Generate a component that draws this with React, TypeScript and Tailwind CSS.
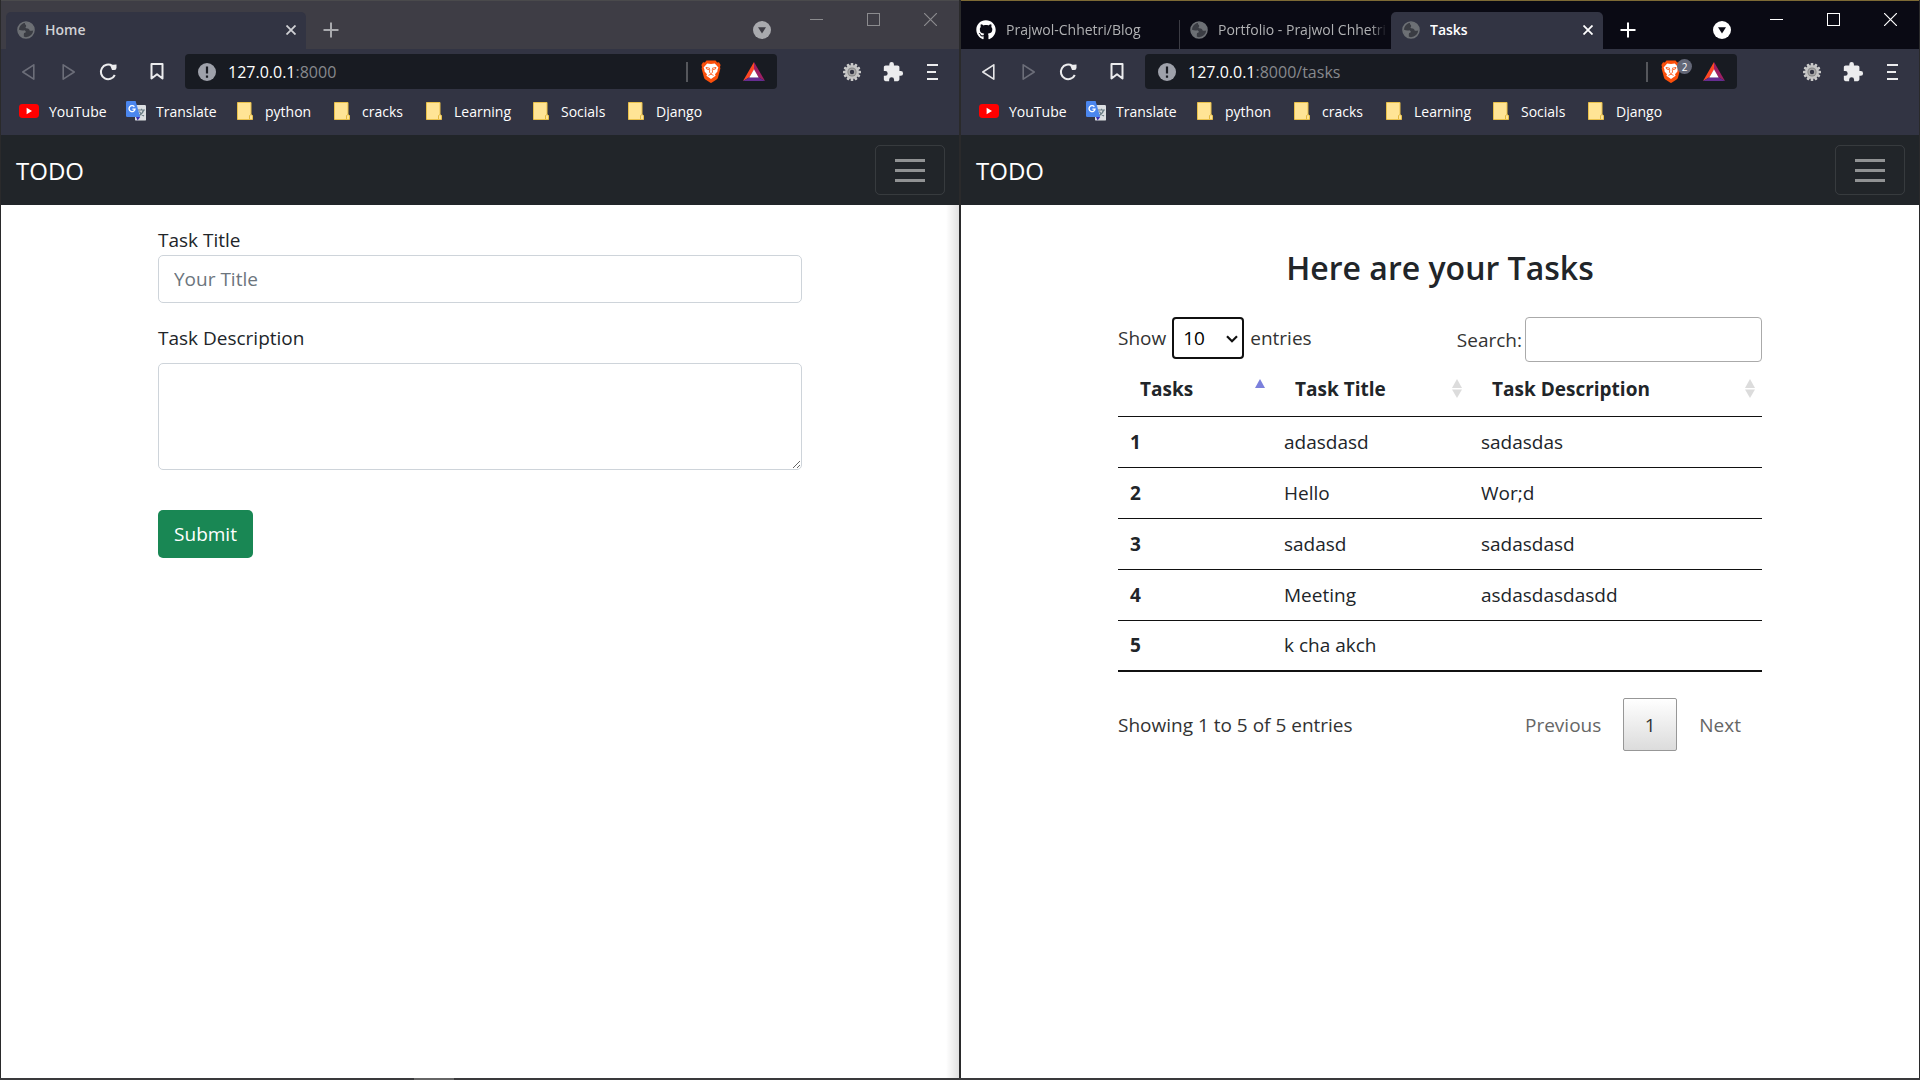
import React, { ReactNode } from 'react';
import { FaGithub } from 'react-icons/fa';

function Globe() {
  return (
    <svg viewBox="0 0 18 18" className="size-[18px] shrink-0" aria-hidden="true">
      <circle cx="9" cy="9" r="8" fill="#3a3c43" stroke="#6d7075" strokeWidth="1.6" />
      <path d="M1.5 8.5 Q5 10 7.5 9.2 Q9.5 10 8.6 11.6 Q6.5 11.6 6.8 13.6 Q7 15.5 6.6 16.8 Q1.5 14.5 1.5 8.5Z" fill="#6d7075" />
      <path d="M8 1.4 Q7.4 3.4 9 4 Q9.6 5.6 8.4 6.4 Q9 7.6 11 7.4 Q12.6 8.4 12.8 9.8 Q15 9.8 16.6 9.4 Q16.8 3 10.6 1.4Z" fill="#6d7075" />
    </svg>
  );
}

function Youtube() {
  return (
    <svg viewBox="0 0 20 14" className="h-[14px] w-5" aria-hidden="true">
      <rect width="20" height="14" rx="3.4" fill="#f00" />
      <path d="M7.600 3.800 13 7 7.600 10.200Z" fill="#fff" />
    </svg>
  );
}

function Translate() {
  return (
    <svg viewBox="0 0 20 20" className="size-5" aria-hidden="true">
      <rect x="9" y="4" width="11" height="15.6" rx="1.2" fill="#dcdfe2" />
      <path d="M12 9h7M15.5 7.8V9M17.6 9q-1 3.8-5 5.8M13.4 10.4q1.4 3 4.6 4.6" fill="none" stroke="#6b7d85" strokeWidth="1.2" />
      <path d="M10 16h4.2L11.6 19.6Z" fill="#3a2fb5" />
      <path d="M1.3 0H9.6L14.2 16H1.3Q0 16 0 14.700V1.300Q0 0 1.300 0Z" fill="#4b86ee" />
      <path d="M8.400 5.800A3 3 0 1 0 9 8.100H6.400" fill="none" stroke="#fff" strokeWidth="1.400" />
    </svg>
  );
}

function Folder() {
  return (
    <svg viewBox="0 0 16 18" className="h-[18px] w-4" aria-hidden="true">
      <path d="M.5.5H14V12.500L15.500 13.500V17.500H.5Z" fill="#ffe495" stroke="#e9c04a" />
      <path d="M12.500 17V13.500L14 12.500" fill="none" stroke="#e3b93f" />
    </svg>
  );
}

function BraveShield() {
  return (
    <svg viewBox="0 0 20 23" className="h-[23px] w-5" aria-hidden="true">
      <path d="M5.500.6H14.500L16.200 2.400 18 2.200 19.600 5 19 7 19.400 8.600 17 17.400Q16.600 18.700 15.600 19.400L10.600 22.800Q10 23.100 9.400 22.800L4.400 19.400Q3.400 18.700 3 17.400L.6 8.600 1 7 .4 5 2 2.200 3.800 2.400Z" fill="#fb4f0b" />
      <path d="M10 4 13.800 3.600 17.400 7.600 16.600 9.600 16.400 11.600 14 14.200 14.600 15.800 10 19 5.400 15.800 6 14.200 3.600 11.600 3.400 9.600 2.600 7.600 6.200 3.600Z" fill="#fff" />
      <path d="M5 7.400 8.600 8.200 8.200 9.800 5.600 9ZM15 7.400 11.400 8.200 11.800 9.800 14.400 9ZM8.800 9.600 8.400 12.400 10 13.600 11.600 12.400 11.200 9.600" fill="none" stroke="#fb4f0b" strokeWidth=".8" />
      <path d="M7.400 15.400 10 14.200 12.600 15.400" fill="none" stroke="#fb4f0b" strokeWidth=".8" />
    </svg>
  );
}

function BatTriangle() {
  return (
    <svg viewBox="0 0 22 19" className="h-[19px] w-[22px]" aria-hidden="true">
      <path d="M11 0 0 19 6.500 15.300 11 7.500Z" fill="#ff4724" />
      <path d="M11 0 22 19 15.500 15.300 11 7.500Z" fill="#9e1f63" />
      <path d="M0 19H22L15.500 15.300H6.500Z" fill="#662d91" />
      <path d="M11 7.200 15.700 15.400H6.300Z" fill="#fff" />
    </svg>
  );
}

const teeth = [0, 30, 60, 90, 120, 150];

function Gear() {
  return (
    <svg viewBox="-9 -9 18 18" className="size-[18px]" aria-hidden="true">
      {teeth.map((a) => (
        <rect key={a} x="-1.300" y="-9" width="2.600" height="18" rx=".6" fill="#c9c9c9" transform={`rotate(${a})`} />
      ))}
      <circle r="7" fill="#c4c4c4" />
      <circle r="4.600" fill="#858585" />
      <circle r="3.600" fill="#a9a9a9" />
      <circle r="2.200" fill="#323443" />
    </svg>
  );
}

type TabProps = { title: string; icon: ReactNode; active?: boolean; className: string; ink?: string };

function Tab({ title, icon, active, className, ink }: TabProps) {
  return (
    <div className={`flex h-[37px] items-center pb-[2px] ${className}`}>
      {icon}
      <span className={`ml-[10px] min-w-0 flex-1 overflow-hidden text-[14px] whitespace-nowrap ${active ? `font-semibold ${ink}` : 'mask-r-from-90% text-[#b0b1b3]'}`}>{title}</span>
      {active && (
        <button type="button" aria-label={`Close ${title}`} className={`mr-[10px] ${ink}`}>
          <svg viewBox="0 0 10 10" className="size-[10px]" aria-hidden="true">
            <path d="M.5.5 9.500 9.500M9.500.5.5 9.500" stroke="currentColor" strokeWidth="1.800" />
          </svg>
        </button>
      )}
    </div>
  );
}

const bookmarks = [
  { name: 'YouTube', icon: <Youtube />, box: 'w-[107px] gap-[10px]' },
  { name: 'Translate', icon: <Translate />, box: 'w-[111px] gap-[10px]' },
  { name: 'python', icon: <Folder />, box: 'w-[97px] gap-3' },
  { name: 'cracks', icon: <Folder />, box: 'w-[92px] gap-3' },
  { name: 'Learning', icon: <Folder />, box: 'w-[107px] gap-3' },
  { name: 'Socials', icon: <Folder />, box: 'w-[95px] gap-3' },
  { name: 'Django', icon: <Folder />, box: 'w-[95px] gap-3' },
];

type WindowProps = {
  focused: boolean;
  tabs: ReactNode;
  path: string;
  blocked?: number;
  children: ReactNode;
};

function BrowserWindow({ focused, tabs, path, blocked, children }: WindowProps) {
  const ink = focused ? 'text-white' : 'text-[#a9aaae]';
  const chrome = focused ? 'text-white' : 'text-[#8b8b8e]';
  return (
    <section className="flex min-w-0 flex-1 flex-col border-x border-[#2a2a2b] bg-white">
      <header className={`flex h-[49px] items-start border-t ${focused ? 'border-[#7d6a35] bg-[#0a0a14]' : 'border-[#4a4a4c] bg-[#3e3d45]'}`}>
        <div className="flex min-w-0 items-end self-stretch">{tabs}</div>
        <button type="button" aria-label="New tab" className={`mt-[21px] ml-[17px] ${ink}`}>
          <svg viewBox="0 0 16 16" className="size-4" aria-hidden="true">
            <path d="M8 .5V15.500M.5 8H15.500" stroke="currentColor" strokeWidth="2" />
          </svg>
        </button>
        <button type="button" aria-label="Search tabs" className={`mt-[20px] mr-[17px] ml-auto ${ink}`}>
          <svg viewBox="0 0 18 18" className="size-[18px]" aria-hidden="true">
            <circle cx="9" cy="9" r="9" fill="currentColor" />
            <path d="M5 6.300H13L9 12.500Z" fill={focused ? '#0a0a14' : '#3e3d45'} />
          </svg>
        </button>
        <div className={`flex h-[37px] ${chrome}`}>
          <button type="button" aria-label="Minimize" className="flex w-[57px] items-center justify-center">
            <span className="h-px w-[13px] bg-current" />
          </button>
          <button type="button" aria-label="Maximize" className="flex w-[57px] items-center justify-center">
            <span className="size-[13px] border border-current" />
          </button>
          <button type="button" aria-label="Close" className="flex w-[57px] items-center justify-center">
            <svg viewBox="0 0 13 13" className="size-[13px]" aria-hidden="true">
              <path d="M0 0 13 13M13 0 0 13" stroke="currentColor" strokeWidth="1.200" />
            </svg>
          </button>
        </div>
      </header>

      <div className="bg-[#323443]">
        <div className="flex h-[45px] items-center">
          <button type="button" aria-label="Back" className={`ml-5 ${focused ? 'text-[#e6e6e8]' : 'text-[#6c6e79]'}`}>
            <svg viewBox="0 0 14 18" className="h-[18px] w-[14px]" aria-hidden="true">
              <path d="M12.800 1.800V16.200L1.800 9Z" fill="none" stroke="currentColor" strokeWidth="1.600" strokeLinejoin="round" />
            </svg>
          </button>
          <button type="button" aria-label="Forward" className="ml-[26px] text-[#6c6e79]">
            <svg viewBox="0 0 14 18" className="h-[18px] w-[14px]" aria-hidden="true">
              <path d="M2.200 1.800V16.200L13.200 9Z" fill="none" stroke="currentColor" strokeWidth="1.600" strokeLinejoin="round" />
            </svg>
          </button>
          <button type="button" aria-label="Reload" className="ml-6 text-[#ececee]">
            <svg viewBox="0 0 18 18" className="size-[18px]" aria-hidden="true">
              <path d="M13.200 2.800A7.300 7.300 0 1 0 15.800 12" fill="none" stroke="currentColor" strokeWidth="2" />
              <path d="M11 2 17.500 1.500V4.500Q17.500 7 15.500 7H13Z" fill="currentColor" />
            </svg>
          </button>
          <button type="button" aria-label="Bookmark this page" className="ml-[33px] text-[#ececee]">
            <svg viewBox="0 0 14 17" className="h-[17px] w-[14px]" aria-hidden="true">
              <path d="M1.500 1H12.500V15.500L7 11.300 1.500 15.500Z" fill="none" stroke="currentColor" strokeWidth="2" strokeLinejoin="round" />
            </svg>
          </button>
          <div className="ml-[21px] flex h-[35px] flex-1 items-center rounded bg-[#181b22] pr-3 pl-[13px]">
            <svg viewBox="0 0 18 18" className="size-[18px] shrink-0" aria-hidden="true">
              <circle cx="9" cy="9" r="9" fill="#9ea1aa" />
              <path d="M9 3.500V10.500M9 12.500V14.700" stroke="#181b22" strokeWidth="2.200" />
            </svg>
            <span className="ml-3 flex-1 text-[16px] text-white">
              127.0.0.1<span className="text-[#87898d]">:8000{path}</span>
            </span>
            <span className="h-5 w-[2px] bg-[#55575c]" />
            <button type="button" aria-label="Brave Shields" className="relative ml-[13px]">
              <BraveShield />
              {blocked && (
                <span className="absolute -top-px left-4 flex size-[15px] items-center justify-center rounded-full bg-[#636777] text-[10px] leading-none text-white">{blocked}</span>
              )}
            </button>
            <button type="button" aria-label="Brave Rewards" className="ml-[22px]">
              <BatTriangle />
            </button>
          </div>
          <button type="button" aria-label="Settings extension" className="ml-[66px]">
            <Gear />
          </button>
          <button type="button" aria-label="Extensions" className="ml-[21px] text-[#ececee]">
            <svg viewBox="0 0 24 24" className="size-[22px]" fill="currentColor" aria-hidden="true">
              <path d="M20.500 11H19V7c0-1.100-.9-2-2-2h-4V3.500a2.500 2.500 0 0 0-5 0V5H4c-1.100 0-2 .9-2 2v3.800h1.500a2.700 2.700 0 0 1 0 5.400H2V20c0 1.100.9 2 2 2h3.800v-1.500a2.700 2.700 0 0 1 5.400 0V22H17c1.100 0 2-.9 2-2v-4h1.500a2.500 2.500 0 0 0 0-5Z" />
            </svg>
          </button>
          <button type="button" aria-label="Menu" className="mr-[21px] ml-[23px] flex h-4 w-[11px] flex-col justify-between">
            <span className="h-[2px] w-full bg-[#ececee]" />
            <span className="h-[2px] w-[9px] bg-[#ececee]" />
            <span className="h-[2px] w-full bg-[#ececee]" />
          </button>
        </div>
        <nav aria-label="Bookmarks" className="flex h-[41px] items-start pt-[7px] pl-[18px] text-[14px] text-white">
          {bookmarks.map((b) => (
            <a key={b.name} href="#" className={`flex h-5 items-center ${b.box}`}>
              {b.icon}
              {b.name}
            </a>
          ))}
        </nav>
      </div>

      <nav aria-label="Main" className="flex h-[70px] items-center justify-between bg-[#212529] pr-[14px] pl-[15px]">
        <a href="#" className="pt-[2px] text-[24px] leading-[38px] text-white">TODO</a>
        <button type="button" aria-label="Toggle navigation" className="flex h-[50px] w-[70px] flex-col items-center justify-center gap-[7px] rounded-[5px] border border-white/10">
          <span className="h-[3px] w-[30px] bg-[#909293]" />
          <span className="h-[3px] w-[30px] bg-[#909293]" />
          <span className="h-[3px] w-[30px] bg-[#909293]" />
        </button>
      </nav>
      {children}
    </section>
  );
}

function TaskForm() {
  return (
    <main className="flex-1 bg-linear-to-l from-black/12 to-transparent bg-size-[13px_100%] bg-right bg-no-repeat pt-[20px]">
      <form className="mx-auto flex w-full max-w-[644px] flex-col items-start text-[19px] leading-[30px] text-[#212529]">
        <label htmlFor="title">Task Title</label>
        <input id="title" type="text" placeholder="Your Title" className="h-12 w-full rounded-[5px] border border-[#ced4da] px-[15px] placeholder:text-[#6c757d]" />
        <label htmlFor="description" className="mt-5 mb-[10px]">Task Description</label>
        <textarea id="description" className="h-[107px] w-full rounded-[5px] border border-[#ced4da] px-[15px] py-2" />
        <button type="submit" className="mt-10 h-12 w-[95px] rounded-[5px] bg-[#198754] text-white">Submit</button>
      </form>
    </main>
  );
}

const rows = [
  ['1', 'adasdasd', 'sadasdas'],
  ['2', 'Hello', 'Wor;d'],
  ['3', 'sadasd', 'sadasdasd'],
  ['4', 'Meeting', 'asdasdasdasdd'],
  ['5', 'k cha akch', ''],
];

const columns = [
  { name: 'Tasks', box: 'w-[156px] pl-[22px] pr-[9px]', sorted: true },
  { name: 'Task Title', box: 'w-[197px] pl-[21px] pr-[9px]', sorted: false },
  { name: 'Task Description', box: 'pl-[21px] pr-[7px]', sorted: false },
];

function TaskTable() {
  return (
    <main className="flex-1 pt-[38px]">
      <div className="mx-auto w-full max-w-[644px] text-[19px] leading-[30px] text-[#333]">
        <h1 className="mb-[24px] text-center text-[32px] leading-[50px] font-semibold text-[#212529]">Here are your Tasks</h1>
        <div className="flex items-start justify-between">
          <label className="flex h-[42px] items-center gap-[6px]">
            Show
            <span className="relative flex">
              <select className="h-[42px] w-[72px] appearance-none rounded border-2 border-[#101010] bg-white pl-[9px] text-black">
                <option>10</option>
                <option>25</option>
                <option>50</option>
              </select>
              <svg viewBox="0 0 12 8" className="pointer-events-none absolute top-[18px] right-[6px] h-2 w-3" aria-hidden="true">
                <path d="M1 1.200 6 6.200 11 1.200" fill="none" stroke="#101010" strokeWidth="2.200" />
              </svg>
            </span>
            entries
          </label>
          <label className="flex h-[45px] items-center gap-[3px]">
            Search:
            <input type="search" className="h-[45px] w-[237px] rounded border border-[#aaa] px-2" />
          </label>
        </div>
        <table className="w-full table-fixed border-collapse border-b-2 border-[#111] text-left text-[#212529]">
          <thead>
            <tr className="h-[54px] border-b border-[#111]">
              {columns.map((c) => (
                <th key={c.name} scope="col" aria-sort={c.sorted ? 'ascending' : 'none'} className={`font-bold ${c.box}`}>
                  <div className="flex items-center justify-between">
                    {c.name}
                    <svg viewBox="0 0 10 20" className="h-5 w-[10px]" aria-hidden="true">
                      <path d="M5 0 10 9H0Z" fill={c.sorted ? '#7b80dc' : '#dcdcdc'} />
                      {!c.sorted && <path d="M5 19 10 10.500H0Z" fill="#dcdcdc" />}
                    </svg>
                  </div>
                </th>
              ))}
            </tr>
          </thead>
          <tbody>
            {rows.map((r) => (
              <tr key={r[0]} className="h-[51px] border-b border-[#111] last:border-b-2">
                <th scope="row" className="px-3 font-bold">{r[0]}</th>
                <td className="px-[10px]">{r[1]}</td>
                <td className="px-[10px]">{r[2]}</td>
              </tr>
            ))}
          </tbody>
        </table>
        <div className="mt-[26px] flex items-center">
          <span className="flex-1">Showing 1 to 5 of 5 entries</span>
          <button type="button" disabled className="mr-[22px] text-[#666]">Previous</button>
          <button type="button" aria-current="page" className="h-[53px] w-[54px] rounded-[2px] border border-[#979797] bg-linear-to-b from-white to-[#dcdcdc]">1</button>
          <button type="button" disabled className="mr-[21px] ml-[22px] text-[#666]">Next</button>
        </div>
      </div>
    </main>
  );
}

export default function App() {
  return (
    <div className="flex min-h-screen flex-col bg-[#3a3a3c] font-['Open_Sans','Noto_Sans',sans-serif]">
      <div className="flex flex-1">
        <BrowserWindow
          focused={false}
          path=""
          tabs={<Tab title="Home" icon={<Globe />} active ink="text-[#d0d1d5]" className="ml-[5px] w-[300px] rounded-t-[5px] bg-[#323443] pl-[11px]" />}
        >
          <TaskForm />
        </BrowserWindow>
        <BrowserWindow
          focused
          path="/tasks"
          blocked={2}
          tabs={
            <>
              <Tab title="Prajwol-Chhetri/Blog" icon={<FaGithub className="size-5 shrink-0 text-white" />} className="w-[218px] pl-[15px]" />
              <span className="h-[29px] w-px bg-[#3c3c44]" />
              <Tab title="Portfolio - Prajwol Chhetri" icon={<Globe />} className="w-[211px] pr-[4px] pl-[10px]" />
              <Tab title="Tasks" icon={<Globe />} active ink="text-white" className="w-[212px] rounded-t-[5px] bg-[#323443] pl-[11px]" />
            </>
          }
        >
          <TaskTable />
        </BrowserWindow>
      </div>
      <div className="h-[2px] pl-[414px]">
        <div className="h-full w-10 bg-[#666]" />
      </div>
    </div>
  );
}
